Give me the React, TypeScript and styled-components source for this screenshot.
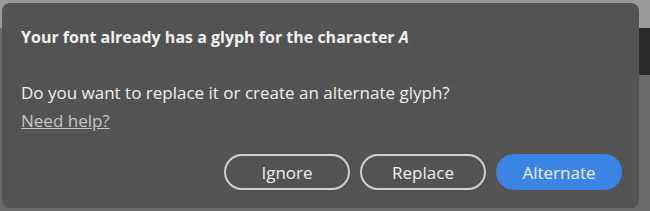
import styled, { createGlobalStyle } from 'styled-components';

const GlobalStyle = createGlobalStyle`
  html, body {
    margin: 0;
    padding: 0;
    background: #6e6e6e;
    font-family: 'Open Sans', 'Noto Sans', sans-serif;
  }
`;

const Backdrop = styled.div`
  position: relative;
  width: 650px;
  height: 211px;
  padding: 3px 11px 3px 2px;
  box-sizing: border-box;
  background: linear-gradient(#9a9a9a 0 28px, #6a6a6a 28px);
  &::before {
    content: '';
    position: absolute;
    right: 0;
    top: 28px;
    width: 11px;
    height: 47px;
    background: #2a2a2a;
  }
`;

const Dialog = styled.div`
  height: 100%;
  box-sizing: border-box;
  background: #535353;
  border-radius: 8px;
  padding: 23px 17px 18px 19px;
  display: flex;
  flex-direction: column;
  color: #f0f0f0;
`;

const Title = styled.h2`
  margin: 0;
  font-size: 16px;
  font-weight: 700;
  line-height: 22px;
  em {
    font-style: italic;
  }
`;

const Message = styled.p`
  margin: 33px 0 0;
  font-size: 17px;
  line-height: 23px;
`;

const HelpLink = styled.a`
  font-size: 17px;
  line-height: 23px;
  color: #c6c6c6;
  text-decoration: underline;
  align-self: flex-start;
  margin-top: 5px;
`;

const Actions = styled.div`
  margin-top: auto;
  display: flex;
  justify-content: flex-end;
  gap: 10px;
`;

const Button = styled.button<{ $primary?: boolean }>`
  width: 126px;
  height: 36px;
  border-radius: 18px;
  box-sizing: border-box;
  font-family: inherit;
  font-size: 17px;
  cursor: pointer;
  color: #f0f0f0;
  background: ${p => (p.$primary ? '#3b84e3' : 'transparent')};
  border: ${p => (p.$primary ? 'none' : '2px solid #cfcfcf')};
`;

export default function App() {
  return (
    <>
      <GlobalStyle />
      <Backdrop>
        <Dialog>
          <Title>
            Your font already has a glyph for the character <em>A</em>
          </Title>
          <Message>Do you want to replace it or create an alternate glyph?</Message>
          <HelpLink href="#">Need help?</HelpLink>
          <Actions>
            <Button>Ignore</Button>
            <Button>Replace</Button>
            <Button $primary>Alternate</Button>
          </Actions>
        </Dialog>
      </Backdrop>
    </>
  );
}
